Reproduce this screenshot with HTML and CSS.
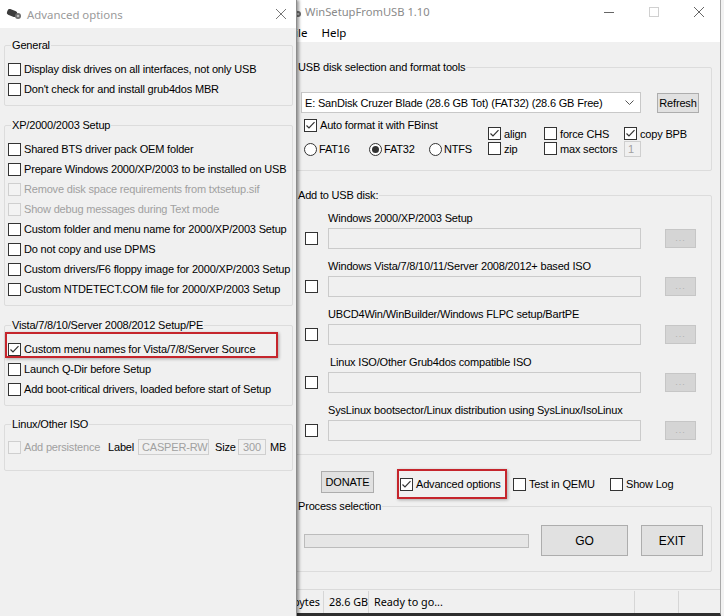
FILE: index.html
```html
<!DOCTYPE html>
<html>
<head>
<meta charset="utf-8">
<title>WinSetupFromUSB</title>
<link rel="stylesheet" href="styles.css">
</head>
<body>
<div class="desktop">

  <div class="win main">
    <div class="titlebar">
      <svg class="appicon" width="16" height="12" viewBox="0 0 16 12"><rect x="1" y="2" width="10" height="6" rx="2" transform="rotate(22 6 5)" fill="#3c3c3c"/><circle cx="12" cy="8" r="3" fill="#6b6b6b"/><circle cx="12" cy="8" r="1.3" fill="#bbb"/></svg>
      <span class="ttl ttl-main">WinSetupFromUSB 1.10</span>
      <div class="ctrls">
        <svg width="10" height="10" viewBox="0 0 10 10"><line x1="0" y1="5.5" x2="10" y2="5.5" stroke="#666" stroke-width="1"/></svg>
        <svg width="10" height="10" viewBox="0 0 10 10"><rect x="0.5" y="0.5" width="9" height="9" fill="none" stroke="#d0d0d0" stroke-width="1"/></svg>
        <svg width="10" height="10" viewBox="0 0 10 10"><path d="M0 0L10 10M10 0L0 10" stroke="#666" stroke-width="1"/></svg>
      </div>
    </div>
    <div class="menubar"><span class="mi">File</span><span class="mi">Help</span></div>

    <div class="mbody">
      <fieldset class="g-usb">
        <legend>USB disk selection and format tools</legend>
        <div class="row-a">
          <div class="combo"><span class="combo-t">E: SanDisk Cruzer Blade (28.6 GB Tot) (FAT32) (28.6 GB Free)</span><svg width="9" height="6" viewBox="0 0 9 6"><polyline points="0.5,0.5 4.5,4.5 8.5,0.5" fill="none" stroke="#555" stroke-width="1"/></svg></div>
          <div class="btn refresh">Refresh</div>
        </div>
        <div class="row-b">
          <div class="fmt">
            <div class="r16"><span class="cb"><svg width="11" height="11" viewBox="0 0 11 11"><path d="M1.5 5.5L4 8L9.5 2.2" fill="none" stroke="#333" stroke-width="1.2"/></svg></span>Auto format it with FBinst</div>
            <div class="radios">
              <div class="rad w65"><span class="rb"></span>FAT16</div>
              <div class="rad w60"><span class="rb on"></span>FAT32</div>
              <div class="rad"><span class="rb"></span>NTFS</div>
            </div>
          </div>
          <div class="col c-align">
            <div class="r15"><span class="cb"><svg width="11" height="11" viewBox="0 0 11 11"><path d="M1.5 5.5L4 8L9.5 2.2" fill="none" stroke="#333" stroke-width="1.2"/></svg></span>align</div>
            <div class="r15"><span class="cb"></span>zip</div>
          </div>
          <div class="col c-force">
            <div class="r15"><span class="cb"></span>force CHS</div>
            <div class="r15"><span class="cb"></span>max sectors</div>
          </div>
          <div class="col">
            <div class="r15"><span class="cb"><svg width="11" height="11" viewBox="0 0 11 11"><path d="M1.5 5.5L4 8L9.5 2.2" fill="none" stroke="#333" stroke-width="1.2"/></svg></span>copy BPB</div>
            <div class="num">1</div>
          </div>
        </div>
      </fieldset>

      <fieldset class="g-add">
        <legend>Add to USB disk:</legend>
        <div class="item">
          <div class="ilabel">Windows 2000/XP/2003 Setup</div>
          <div class="iline"><span class="cb"></span><div class="tbox"></div><div class="dots">...</div></div>
        </div>
        <div class="item">
          <div class="ilabel">Windows Vista/7/8/10/11/Server 2008/2012+ based ISO</div>
          <div class="iline"><span class="cb"></span><div class="tbox"></div><div class="dots">...</div></div>
        </div>
        <div class="item">
          <div class="ilabel">UBCD4Win/WinBuilder/Windows FLPC setup/BartPE</div>
          <div class="iline"><span class="cb"></span><div class="tbox"></div><div class="dots">...</div></div>
        </div>
        <div class="item">
          <div class="ilabel ind">Linux ISO/Other Grub4dos compatible ISO</div>
          <div class="iline"><span class="cb"></span><div class="tbox"></div><div class="dots">...</div></div>
        </div>
        <div class="item">
          <div class="ilabel">SysLinux bootsector/Linux distribution using SysLinux/IsoLinux</div>
          <div class="iline"><span class="cb"></span><div class="tbox"></div><div class="dots">...</div></div>
        </div>
      </fieldset>

      <div class="actions">
        <div class="btn donate">DONATE</div>
        <div class="opt o-adv"><span class="cb"><svg width="11" height="11" viewBox="0 0 11 11"><path d="M1.5 5.5L4 8L9.5 2.2" fill="none" stroke="#333" stroke-width="1.2"/></svg></span>Advanced options<span class="hl hl-adv"></span></div>
        <div class="opt o-qemu"><span class="cb"></span>Test in QEMU</div>
        <div class="opt"><span class="cb"></span>Show Log</div>
      </div>

      <fieldset class="g-proc">
        <legend>Process selection</legend>
        <div class="prow">
          <div class="progress"></div>
          <div class="btn go">GO</div>
          <div class="btn exit">EXIT</div>
        </div>
      </fieldset>

      <div class="status">
        <div class="sp sp1">0 bytes</div>
        <div class="sp sp2">28.6 GB</div>
        <div class="sp sp3">Ready to go...</div>
        <div class="sp sp4"></div>
        <div class="sp sp5"></div>
      </div>
    </div>
  </div>

  <div class="win adv">
    <div class="titlebar">
      <svg class="appicon" width="16" height="12" viewBox="0 0 16 12"><rect x="1" y="2" width="10" height="6" rx="2" transform="rotate(22 6 5)" fill="#3c3c3c"/><circle cx="12" cy="8" r="3" fill="#6b6b6b"/><circle cx="12" cy="8" r="1.3" fill="#bbb"/></svg>
      <span class="ttl ttl-adv">Advanced options</span>
      <svg width="10" height="10" viewBox="0 0 10 10"><path d="M0 0L10 10M10 0L0 10" stroke="#777" stroke-width="1"/></svg>
    </div>
    <div class="abody">
      <fieldset class="a-g1">
        <legend>General</legend>
        <div class="r"><span class="cb"></span>Display disk drives on all interfaces, not only USB</div>
        <div class="r"><span class="cb"></span>Don't check for and install grub4dos MBR</div>
      </fieldset>
      <fieldset class="a-g2">
        <legend>XP/2000/2003 Setup</legend>
        <div class="r"><span class="cb"></span>Shared BTS driver pack OEM folder</div>
        <div class="r"><span class="cb"></span>Prepare Windows 2000/XP/2003 to be installed on USB</div>
        <div class="r dis"><span class="cb"></span>Remove disk space requirements from txtsetup.sif</div>
        <div class="r dis"><span class="cb"></span>Show debug messages during Text mode</div>
        <div class="r"><span class="cb"></span>Custom folder and menu name for 2000/XP/2003 Setup</div>
        <div class="r"><span class="cb"></span>Do not copy and use DPMS</div>
        <div class="r"><span class="cb"></span>Custom drivers/F6 floppy image for 2000/XP/2003 Setup</div>
        <div class="r"><span class="cb"></span>Custom NTDETECT.COM file for 2000/XP/2003 Setup</div>
      </fieldset>
      <fieldset class="a-g3">
        <legend>Vista/7/8/10/Server 2008/2012 Setup/PE</legend>
        <div class="r hlrow"><span class="cb"><svg width="11" height="11" viewBox="0 0 11 11"><path d="M1.5 5.5L4 8L9.5 2.2" fill="none" stroke="#333" stroke-width="1.2"/></svg></span>Custom menu names for Vista/7/8/Server Source<span class="hl hl-vista"></span></div>
        <div class="r"><span class="cb"></span>Launch Q-Dir before Setup</div>
        <div class="r"><span class="cb"></span>Add boot-critical drivers, loaded before start of Setup</div>
      </fieldset>
      <fieldset class="a-g4">
        <legend>Linux/Other ISO</legend>
        <div class="r">
          <span class="cb dis-b"></span><span class="dis-t persist">Add persistence</span>
          <span class="lbl">Label</span><span class="field f-label">CASPER-RW</span>
          <span class="lbl size">Size</span><span class="field f-size">300</span>
          <span class="mb">MB</span>
        </div>
      </fieldset>
    </div>
  </div>

</div>
</body>
</html>
```

FILE: styles.css
```css
* { box-sizing: border-box; }
html, body { margin: 0; padding: 0; }
body {
  width: 724px; height: 616px; overflow: hidden;
  background: #f2f2f2;
  font-family: "Liberation Sans", Arial, sans-serif;
  font-size: 11px; letter-spacing: -0.18px; color: #000;
}
.desktop { position: relative; width: 724px; height: 616px; overflow: hidden; }

.win {
  position: absolute; top: 0; height: 616px;
  background: #f0f0f0;
  display: flex; flex-direction: column;
}
.main { left: 276px; width: 445px; border-right: 1px solid #a9a9a9; border-bottom: 3px solid #2e2e2e; }
.adv { left: 0; width: 297px; border-right: 1px solid #8c8c8c; box-shadow: 2px 0 3px rgba(0,0,0,0.4); z-index: 2; }

.titlebar { flex: none; background: #fff; display: flex; align-items: center; }
.adv .titlebar { height: 28px; padding: 0 10px 0 6px; }
.main .titlebar { height: 23px; padding: 0 16px 0 10px; }
.appicon { flex: none; }
.ttl {
  flex: 1; white-space: nowrap; letter-spacing: 0;
  font-family: "Segoe UI", "Noto Sans", sans-serif;
}
.ttl-adv { margin-left: 5px; color: #9a9a9a; font-size: 11.4px; }
.ttl-main { margin-left: 3px; color: #8a8a8a; font-size: 11.2px; }
.ctrls { display: flex; gap: 35px; align-items: center; }

.menubar {
  flex: none; height: 19px; background: #fff; padding-left: 6px;
  display: flex; align-items: center; letter-spacing: 0;
  font-family: "Segoe UI", "Noto Sans", sans-serif; font-size: 11.5px;
}
.mi { padding: 0 7px; }

fieldset { margin: 0; border: 1px solid #dcdcdc; border-radius: 2px; min-width: 0; }
legend { padding: 0 1px; height: 14px; line-height: 14px; white-space: nowrap; }

/* checkbox & radio */
.cb {
  flex: none; width: 13px; height: 13px; margin-right: 3px;
  border: 1px solid #333; background: #fff;
  display: flex; align-items: center; justify-content: center;
}
.dis { color: #a0a0a0; }
.dis .cb, .cb.dis-b { border-color: #cfcfcf; background: #f3f3f3; }
.dis-t { color: #a0a0a0; }
.rb {
  flex: none; width: 13px; height: 13px; margin-right: 2px;
  border: 1px solid #333; border-radius: 50%; background: #fff;
  display: flex; align-items: center; justify-content: center;
}
.rb.on::after { content: ""; width: 7px; height: 7px; border-radius: 50%; background: #333; }

.btn {
  flex: none; background: #e1e1e1; border: 1px solid #adadad;
  display: flex; align-items: center; justify-content: center;
}

/* ---------- advanced options window ---------- */
.abody { flex: 1; display: flex; flex-direction: column; }
.adv fieldset { margin: 0 3px 0 4px; padding: 7px 0 6px 3px; }
.adv legend { margin-left: 3px; }
.a-g1 { margin-top: 10px !important; }
.a-g2, .a-g3 { margin-top: 12px !important; }
.a-g4 { margin-top: 11px !important; padding-top: 6px !important; padding-bottom: 13px !important; }
.r { height: 20px; display: flex; align-items: center; white-space: nowrap; }
.hlrow { position: relative; }
.hl {
  position: absolute; border: 2px solid #c5252c;
  box-shadow: 1px 1px 3px rgba(0,0,0,0.3);
  pointer-events: none;
}
.hl-vista { left: -3px; top: -7px; width: 273px; height: 26px; }

.persist { width: 84px; }
.lbl { width: 30px; }
.lbl.size { width: 23px; margin-left: 6px; }
.field {
  height: 16px; border: 1px solid #cfcfcf; background: #f0f0f0; color: #a0a0a0;
  display: flex; align-items: center;
}
.f-label { width: 71px; padding-left: 3px; }
.f-size { width: 28px; justify-content: center; }
.mb { margin-left: 4px; }

/* ---------- main window ---------- */
.mbody { flex: 1; display: flex; flex-direction: column; }
.main fieldset { margin: 0 8px 0 14px; padding-left: 6px; padding-right: 0; }
.main legend { margin-left: 0; }
.g-usb { margin-top: 18px !important; padding-top: 18px; padding-bottom: 13px; }
.row-a { display: flex; align-items: center; margin-left: 4px; height: 21px; }
.combo {
  width: 340px; height: 21px; background: #fff; border: 1px solid #c8c8c8;
  display: flex; align-items: center; justify-content: space-between;
  padding: 0 6px 0 3px; white-space: nowrap;
}
.refresh { width: 42px; height: 20px; margin-left: 16px; }
.row-b { display: flex; margin: 4px 0 0 7px; height: 40px; }
.fmt { width: 184px; }
.r16 { height: 16px; display: flex; align-items: center; white-space: nowrap; }
.radios { display: flex; margin-top: 8px; height: 16px; align-items: center; }
.rad { display: flex; align-items: center; }
.w65 { width: 65px; }
.w60 { width: 60px; }
.col { display: flex; flex-direction: column; padding-top: 9px; }
.c-align { width: 56px; }
.c-force { width: 80px; }
.r15 { height: 15px; display: flex; align-items: center; white-space: nowrap; }
.num {
  width: 17px; height: 16px; border: 1px solid #cfcfcf; background: #f0f0f0;
  color: #a0a0a0; padding-left: 3px; line-height: 14px;
}

.g-add { margin-top: 17px !important; padding-top: 9px; padding-bottom: 13px; }
.item + .item { margin-top: 10px; }
.ilabel { height: 14px; line-height: 14px; padding-left: 31px; white-space: nowrap; }
.ilabel.ind { padding-left: 33px; }
.iline { display: flex; align-items: center; height: 21px; margin-top: 3px; padding-left: 8px; }
.iline .cb { margin-right: 10px; }
.tbox { width: 313px; height: 21px; border: 1px solid #cbcbcb; background: #f0f0f0; }
.dots {
  margin-left: 24px; width: 31px; height: 19px;
  background: #d5d5d5; border: 1px solid #c6c6c6; color: #b0b0b0;
  font-size: 9px; letter-spacing: 1px; text-align: center; line-height: 17px;
}

.actions { flex: none; display: flex; align-items: center; height: 30px; margin: 14px 0 0 45px; }
.donate { width: 53px; height: 22px; align-self: flex-start; margin-top: 2px; }
.opt { display: flex; align-items: center; height: 16px; white-space: nowrap; }
.o-adv { position: relative; width: 113px; margin-left: 26px; }
.o-qemu { width: 97px; }
.hl-adv { left: -3px; top: -7px; width: 110px; height: 30px; }

.g-proc { padding-top: 12px; padding-bottom: 15px; }
.prow { display: flex; align-items: center; height: 31px; }
.progress { width: 225px; height: 14px; margin-left: 7px; background: #e6e6e6; border: 1px solid #bcbcbc; }
.go, .exit { font-size: 12px; letter-spacing: 0; }
.go { width: 87px; height: 31px; margin-left: 12px; }
.exit { width: 62px; height: 31px; margin-left: 13px; }

.status {
  flex: none; margin-top: auto; height: 24px;
  border-top: 1px solid #dadada; display: flex; align-items: center;
  font-family: "Segoe UI", "Noto Sans", sans-serif; font-size: 10.8px; letter-spacing: 0;
}
.sp { height: 22px; display: flex; align-items: center; white-space: nowrap; }
.sp + .sp { border-left: 1px solid #d6d6d6; }
.sp1 { width: 47px; justify-content: flex-end; padding-right: 3px; }
.sp2 { width: 45px; padding-left: 5px; }
.sp3 { width: 266px; padding-left: 5px; }
.sp4 { width: 44px; }
.sp5 { width: 40px; }
```
